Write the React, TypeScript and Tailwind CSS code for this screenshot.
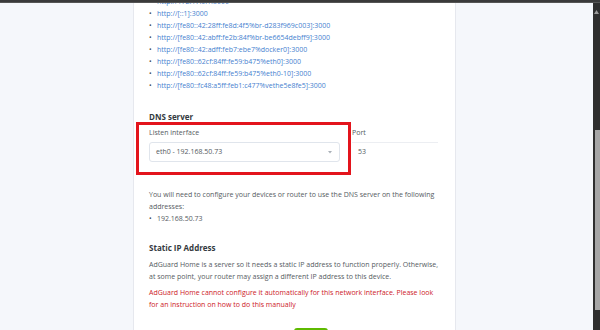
import React from 'react';

const urls = [
  'http://172.17.0.1:3000',
  'http://[::1]:3000',
  'http://[fe80::42:28ff:fe8d:4f5%br-d283f969c003]:3000',
  'http://[fe80::42:abff:fe2b:84f%br-be6654debff9]:3000',
  'http://[fe80::42:adff:feb7:ebe7%docker0]:3000',
  'http://[fe80::62cf:84ff:fe59:b475%eth0]:3000',
  'http://[fe80::62cf:84ff:fe59:b475%eth0-10]:3000',
  'http://[fe80::fc48:a5ff:feb1:c477%vethe5e8fe5]:3000',
];

const Bullet: React.FC<{ children: React.ReactNode }> = ({ children }) => (
  <li className="flex items-center h-[12px]">
    <span className="w-[8px] text-[#495057] text-[7px]">•</span>
    {children}
  </li>
);

const App: React.FC = () => {
  return (
    <div className="w-[600px] h-[330px] flex flex-col overflow-hidden bg-[#2b2b2b] text-[#555b62] [font-family:'Open_Sans',sans-serif]">
      <div className="h-[3px] bg-[#3a3a3a] border-b border-[#555]" />
      <div className="flex flex-1 min-h-0">
        <main className="flex-1 bg-[#f5f7fb] overflow-hidden">
          <div className="ml-[133px] w-[323px] -mt-[7px] h-[400px] bg-white border-x border-[#e6e8ee] px-[15px] text-[7px]">
            <ul>
              {urls.map((u) => (
                <Bullet key={u}>
                  <span className="text-[#467fcf]">{u}</span>
                </Bullet>
              ))}
            </ul>

            <h3 className="mt-[19px] text-[8px] font-bold text-[#343a40] leading-[11px]">DNS server</h3>

            <div className="relative flex mt-[6px]">
              <div className="absolute left-[-13px] top-[-6px] w-[215px] h-[53px] border-[3px] border-[#e3141c] pointer-events-none" />
              <div className="w-[191px]">
                <div className="leading-[10px]">Listen interface</div>
                <div className="mt-[4px] h-[20px] border border-[#e0e5ec] rounded-[3px] flex items-center justify-between px-[6px]">
                  <span>eth0 - 192.168.50.73</span>
                  <svg width="4" height="3" viewBox="0 0 4 3" className="mr-[1px]">
                    <path d="M0 0 L4 0 L2 2.5 Z" fill="#aab0b8" />
                  </svg>
                </div>
              </div>
              <div className="ml-[12px] w-[86px]">
                <div className="leading-[10px]">Port</div>
                <div className="mt-[4px] h-[20px] border-t border-[#eceef2] flex items-center px-[6px]">53</div>
              </div>
            </div>

            <p className="mt-[27px] leading-[12px]">
              You will need to configure your devices or router to use the DNS server on the following addresses:
            </p>
            <ul>
              <Bullet>192.168.50.73</Bullet>
            </ul>

            <h3 className="mt-[17px] text-[8px] font-bold text-[#343a40] leading-[11px]">Static IP Address</h3>
            <p className="mt-[6px] leading-[12px]">
              AdGuard Home is a server so it needs a static IP address to function properly. Otherwise, at some point, your router may assign a different IP address to this device.
            </p>
            <p className="mt-[4px] leading-[12px] text-[#cd201f]">
              AdGuard Home cannot configure it automatically for this network interface. Please look for an instruction on how to do this manually
            </p>

            <div className="mt-[17px] flex justify-center pl-[33px]">
              <div className="w-[34px] h-[16px] rounded-[3px] bg-[#5eba00]" />
            </div>
          </div>
        </main>
        <div className="w-[7px] bg-[#2e2e2e] flex flex-col items-center">
          <svg width="5" height="4" viewBox="0 0 5 4" className="mt-[7px]">
            <path d="M0 4 L2.5 0 L5 4 Z" fill="#9a9a9a" />
          </svg>
          <div className="mt-[116px] w-[5px] h-[180px] bg-[#a6a6a6] ml-[1px]" />
        </div>
      </div>
    </div>
  );
};

export default App;
